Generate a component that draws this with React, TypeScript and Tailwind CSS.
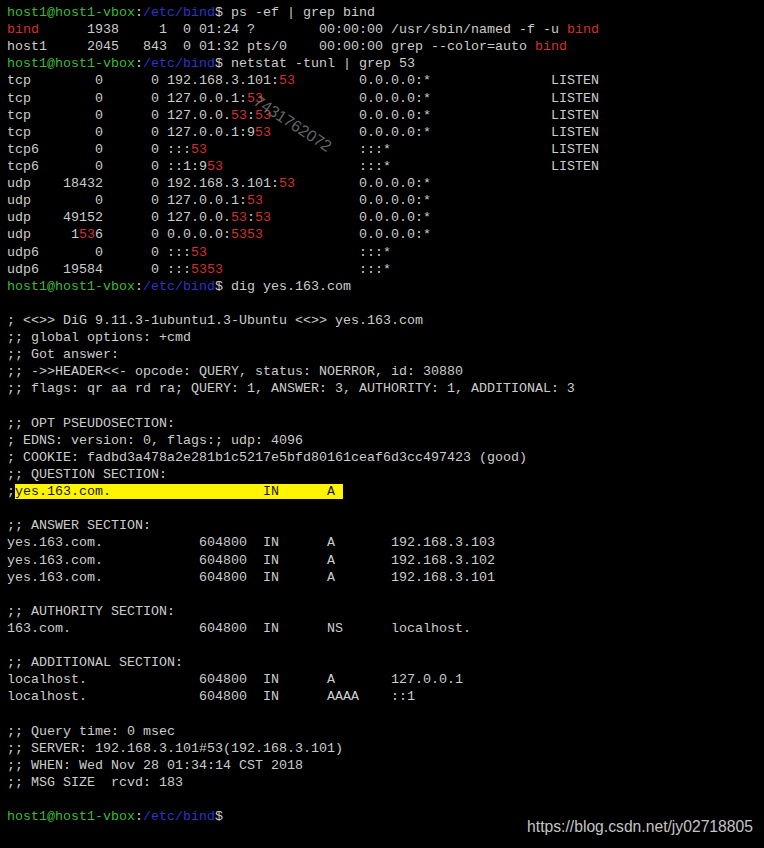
import React from 'react';

type Kind = 'n' | 'g' | 'b' | 'r' | 'hl';
type Seg = { k: Kind; t: string };

const colorOf: Record<Kind, string> = {
  n: 'text-[#cccccc]',
  g: 'text-[#3fb83a]',
  b: 'text-[#2b35c9]',
  r: 'text-[#d0302e]',
  hl: 'bg-[#fff500] text-[#1a1a00]',
};

// text with [..] marks the bits grep coloured red
const marked = (s: string): Seg[] =>
  s
    .split(/(\[[^\]]*\])/)
    .filter(Boolean)
    .map((p) => (p.startsWith('[') ? { k: 'r', t: p.slice(1, -1) } : { k: 'n', t: p }));

const prompt = (cmd: string): Seg[] => [
  { k: 'g', t: 'host1@host1-vbox' },
  { k: 'n', t: ':' },
  { k: 'b', t: '/etc/bind' },
  { k: 'n', t: '$' + cmd },
];

const lines: Seg[][] = [
  prompt(' ps -ef | grep bind'),
  marked('[bind]      1938     1  0 01:24 ?        00:00:00 /usr/sbin/named -f -u [bind]'),
  marked('host1     2045   843  0 01:32 pts/0    00:00:00 grep --color=auto [bind]'),
  prompt(' netstat -tunl | grep 53'),
  marked('tcp        0      0 192.168.3.101:[53]        0.0.0.0:*               LISTEN'),
  marked('tcp        0      0 127.0.0.1:[53]            0.0.0.0:*               LISTEN'),
  marked('tcp        0      0 127.0.0.[53]:[53]           0.0.0.0:*               LISTEN'),
  marked('tcp        0      0 127.0.0.1:9[53]           0.0.0.0:*               LISTEN'),
  marked('tcp6       0      0 :::[53]                   :::*                    LISTEN'),
  marked('tcp6       0      0 ::1:9[53]                 :::*                    LISTEN'),
  marked('udp    18432      0 192.168.3.101:[53]        0.0.0.0:*'),
  marked('udp        0      0 127.0.0.1:[53]            0.0.0.0:*'),
  marked('udp    49152      0 127.0.0.[53]:[53]           0.0.0.0:*'),
  marked('udp     1[53]6      0 0.0.0.0:[5353]            0.0.0.0:*'),
  marked('udp6       0      0 :::[53]                   :::*'),
  marked('udp6   19584      0 :::[5353]                 :::*'),
  prompt(' dig yes.163.com'),
  [],
  marked('; <<>> DiG 9.11.3-1ubuntu1.3-Ubuntu <<>> yes.163.com'),
  marked(';; global options: +cmd'),
  marked(';; Got answer:'),
  marked(';; ->>HEADER<<- opcode: QUERY, status: NOERROR, id: 30880'),
  marked(';; flags: qr aa rd ra; QUERY: 1, ANSWER: 3, AUTHORITY: 1, ADDITIONAL: 3'),
  [],
  marked(';; OPT PSEUDOSECTION:'),
  marked('; EDNS: version: 0, flags:; udp: 4096'),
  marked('; COOKIE: fadbd3a478a2e281b1c5217e5bfd80161ceaf6d3cc497423 (good)'),
  marked(';; QUESTION SECTION:'),
  [
    { k: 'n', t: ';' },
    { k: 'hl', t: 'yes.163.com.                   IN      A ' },
  ],
  [],
  marked(';; ANSWER SECTION:'),
  marked('yes.163.com.            604800  IN      A       192.168.3.103'),
  marked('yes.163.com.            604800  IN      A       192.168.3.102'),
  marked('yes.163.com.            604800  IN      A       192.168.3.101'),
  [],
  marked(';; AUTHORITY SECTION:'),
  marked('163.com.                604800  IN      NS      localhost.'),
  [],
  marked(';; ADDITIONAL SECTION:'),
  marked('localhost.              604800  IN      A       127.0.0.1'),
  marked('localhost.              604800  IN      AAAA    ::1'),
  [],
  marked(';; Query time: 0 msec'),
  marked(';; SERVER: 192.168.3.101#53(192.168.3.101)'),
  marked(';; WHEN: Wed Nov 28 01:34:14 CST 2018'),
  marked(';; MSG SIZE  rcvd: 183'),
  [],
  prompt(''),
];

export default function App() {
  return (
    <div className="relative w-[764px] h-[848px] bg-black overflow-hidden">
      <div className="pt-[4px] pl-[7px] font-['Liberation_Mono','DejaVu_Sans_Mono',monospace] text-[13.33px] leading-[17.12px] whitespace-pre">
        {lines.map((segs, i) => (
          <div key={i} className="h-[17.12px]">
            {segs.map((s, j) => (
              <span key={j} className={colorOf[s.k]}>
                {s.t}
              </span>
            ))}
          </div>
        ))}
      </div>

      {/* faint rotated watermark over the netstat output */}
      <span className="absolute left-[248px] top-[112px] rotate-[33deg] font-['Liberation_Sans',Arial,sans-serif] text-[16px] text-[#7c7c7c] opacity-80">
        7431762072
      </span>

      <span className="absolute right-[11px] bottom-[9px] font-['Liberation_Sans',Arial,sans-serif] text-[15.7px] text-[#c4c4c4]">
        https://blog.csdn.net/jy02718805
      </span>
    </div>
  );
}
